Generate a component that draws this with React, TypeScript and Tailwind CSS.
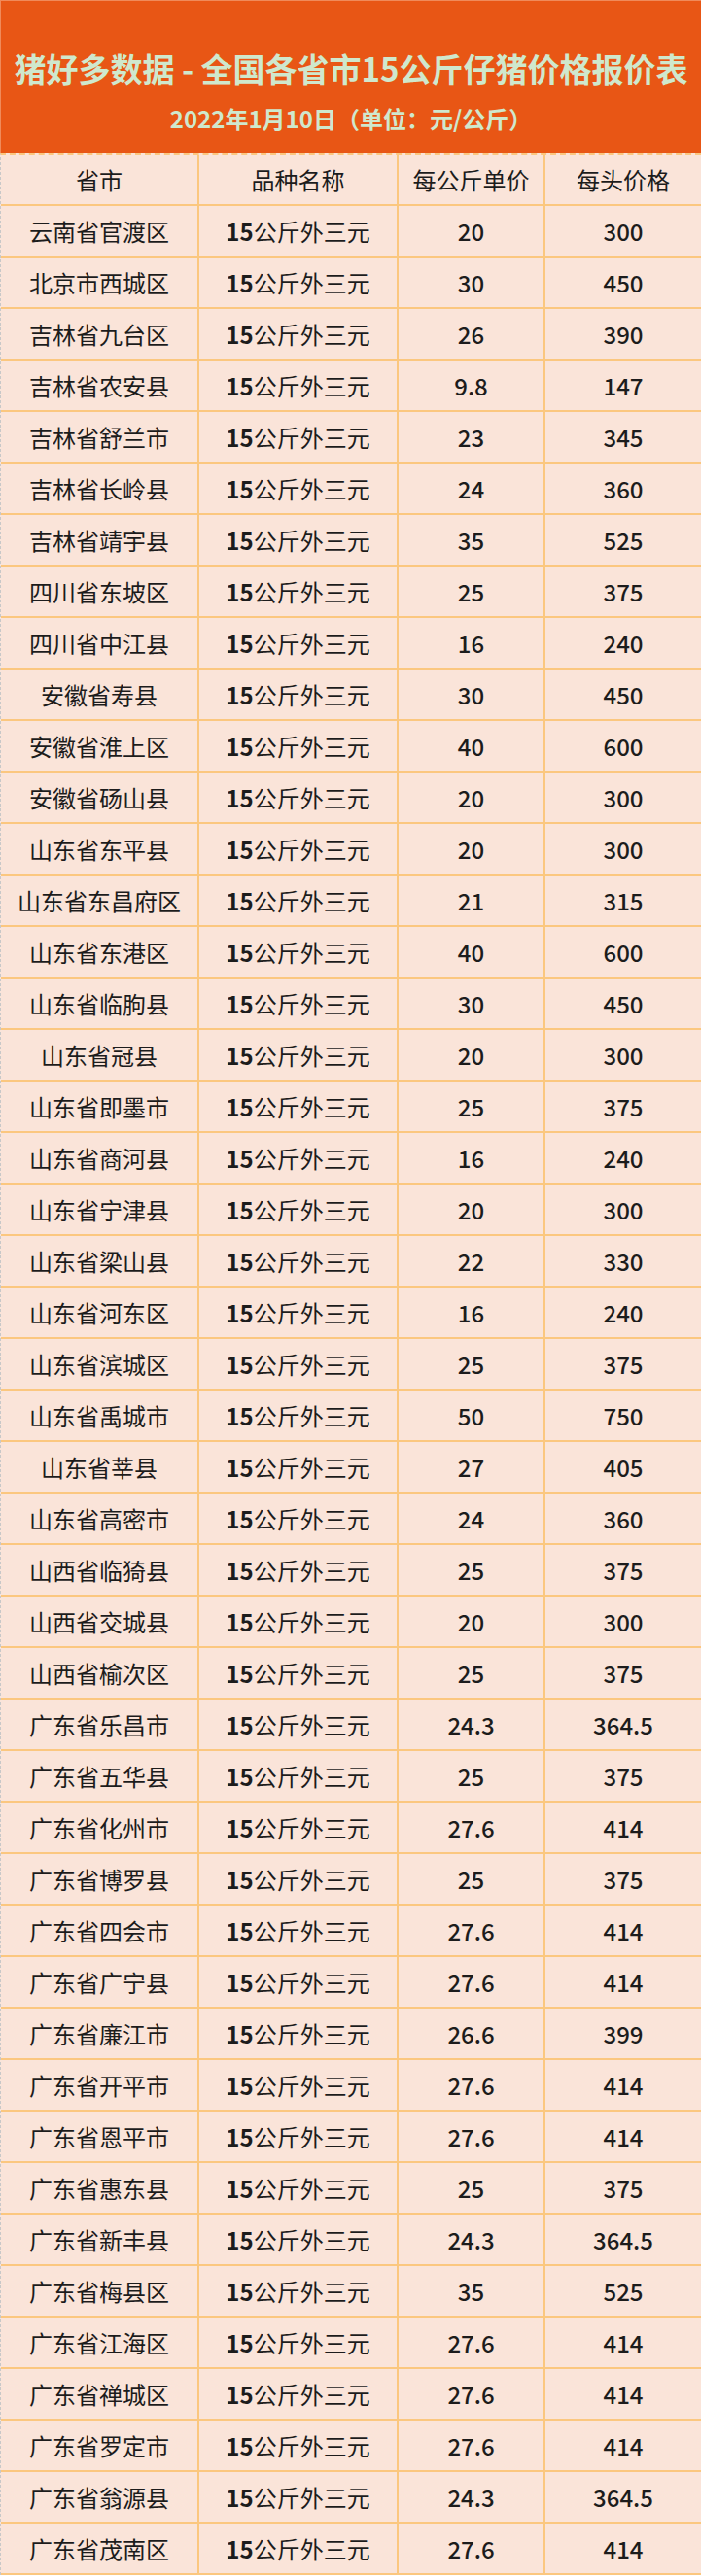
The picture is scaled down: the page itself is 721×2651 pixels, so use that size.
import React from "react";

const rows: [string, string, string][] = [
  ["云南省官渡区", "20", "300"],
  ["北京市西城区", "30", "450"],
  ["吉林省九台区", "26", "390"],
  ["吉林省农安县", "9.8", "147"],
  ["吉林省舒兰市", "23", "345"],
  ["吉林省长岭县", "24", "360"],
  ["吉林省靖宇县", "35", "525"],
  ["四川省东坡区", "25", "375"],
  ["四川省中江县", "16", "240"],
  ["安徽省寿县", "30", "450"],
  ["安徽省淮上区", "40", "600"],
  ["安徽省砀山县", "20", "300"],
  ["山东省东平县", "20", "300"],
  ["山东省东昌府区", "21", "315"],
  ["山东省东港区", "40", "600"],
  ["山东省临朐县", "30", "450"],
  ["山东省冠县", "20", "300"],
  ["山东省即墨市", "25", "375"],
  ["山东省商河县", "16", "240"],
  ["山东省宁津县", "20", "300"],
  ["山东省梁山县", "22", "330"],
  ["山东省河东区", "16", "240"],
  ["山东省滨城区", "25", "375"],
  ["山东省禹城市", "50", "750"],
  ["山东省莘县", "27", "405"],
  ["山东省高密市", "24", "360"],
  ["山西省临猗县", "25", "375"],
  ["山西省交城县", "20", "300"],
  ["山西省榆次区", "25", "375"],
  ["广东省乐昌市", "24.3", "364.5"],
  ["广东省五华县", "25", "375"],
  ["广东省化州市", "27.6", "414"],
  ["广东省博罗县", "25", "375"],
  ["广东省四会市", "27.6", "414"],
  ["广东省广宁县", "27.6", "414"],
  ["广东省廉江市", "26.6", "399"],
  ["广东省开平市", "27.6", "414"],
  ["广东省恩平市", "27.6", "414"],
  ["广东省惠东县", "25", "375"],
  ["广东省新丰县", "24.3", "364.5"],
  ["广东省梅县区", "35", "525"],
  ["广东省江海区", "27.6", "414"],
  ["广东省禅城区", "27.6", "414"],
  ["广东省罗定市", "27.6", "414"],
  ["广东省翁源县", "24.3", "364.5"],
  ["广东省茂南区", "27.6", "414"],
];

const font = { fontFamily: '"Noto Sans CJK SC", "Noto Sans", sans-serif' };

function Cell({ children, last }: { children: React.ReactNode; last?: boolean }) {
  return (
    <div
      className={
        "flex items-center justify-center h-full text-[24px] text-[#1c1c1c] " +
        (last ? "" : "border-r-2 border-[#fbc77f]")
      }
    >
      {children}
    </div>
  );
}

export default function App() {
  return (
    <div className="w-[721px] bg-white" style={font}>
      <div className="h-[157px] bg-[#e85615] border-t border-l border-[#f08a5a] flex flex-col items-center">
        <div className="mt-[49px] h-[40px] leading-[40px] text-[33px] font-bold text-[#cfe8cd] whitespace-nowrap">
          猪好多数据 - 全国各省市15公斤仔猪价格报价表
        </div>
        <div className="mt-[16px] h-[32px] leading-[32px] text-[24px] font-bold text-[#cfe8cd] whitespace-nowrap">
          2022年1月10日（单位：元/公斤）
        </div>
      </div>
      <div className="bg-[#fae4d9] border-l border-dashed border-[#c8c8c8] border-t-2 border-t-[#fbc77f]">
        <div className="grid grid-cols-[204px_205px_151px_160px] h-[53px] border-b-2 border-[#fbc77f]">
          <Cell>省市</Cell>
          <Cell>品种名称</Cell>
          <Cell>每公斤单价</Cell>
          <Cell last>每头价格</Cell>
        </div>
        {rows.map(([name, unit, head], i) => (
          <div
            key={i}
            className="grid grid-cols-[204px_205px_151px_160px] h-[53px] border-b-2 border-[#fbc77f]"
          >
            <Cell>{name}</Cell>
            <Cell>
              <span className="font-semibold">15</span>公斤外三元
            </Cell>
            <Cell>
              <span className="font-medium">{unit}</span>
            </Cell>
            <Cell last>
              <span className="font-medium">{head}</span>
            </Cell>
          </div>
        ))}
      </div>
    </div>
  );
}
